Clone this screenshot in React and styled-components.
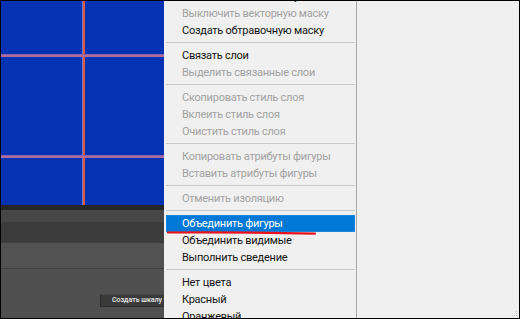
import styled, { createGlobalStyle } from "styled-components";

const GlobalStyle = createGlobalStyle`
  html, body {
    margin: 0;
    padding: 0;
    background: #000;
  }
  * {
    box-sizing: border-box;
  }
`;

const menuItems = [
  { label: "Выключить слой-маску" },
  { label: "Выключить векторную маску", disabled: true },
  { label: "Создать обтравочную маску" },
  { sep: true },
  { label: "Связать слои" },
  { label: "Выделить связанные слои", disabled: true },
  { sep: true },
  { label: "Скопировать стиль слоя", disabled: true },
  { label: "Вклеить стиль слоя", disabled: true },
  { label: "Очистить стиль слоя", disabled: true },
  { sep: true },
  { label: "Копировать атрибуты фигуры", disabled: true },
  { label: "Вставить атрибуты фигуры", disabled: true },
  { sep: true },
  { label: "Отменить изоляцию", disabled: true },
  { sep: true },
  { label: "Объединить фигуры", active: true },
  { label: "Объединить видимые" },
  { label: "Выполнить сведение" },
  { sep: true },
  { label: "Нет цвета" },
  { label: "Красный" },
  { label: "Оранжевый" },
];

function App() {
  return (
    <>
      <GlobalStyle />
      <Frame>
        <Workspace>
          <Canvas>
            <Guide $vertical style={{ left: 81 }} />
            <Guide style={{ top: 53 }} />
            <Guide style={{ top: 154 }} />
          </Canvas>
          <Band $h={5} $bg="#262626" />
          <Band $h={12} $bg="#474747" />
          <Band $h={21} $bg="#3c3c3c" />
          <Band $h={25} $bg="#525252" $line />
          <Timeline>
            <TimelineButton>Создать шкалу времени</TimelineButton>
          </Timeline>
        </Workspace>

        <Menu>
          <MenuList>
            {menuItems.map((item, i) =>
              item.sep ? (
                <Separator key={i} />
              ) : (
                <MenuItem key={i} $disabled={item.disabled} $active={item.active}>
                  {item.label}
                </MenuItem>
              )
            )}
          </MenuList>
          <Underline viewBox="0 0 192 6" preserveAspectRatio="none">
            <path d="M4 2.5 Q 80 2 151 3.6" stroke="#e8101a" strokeWidth="2.2" fill="none" strokeLinecap="round" />
          </Underline>
        </Menu>

        <Divider />

        <SidePane>
          <Grip viewBox="0 0 7 7">
            {[[5, 1], [3, 3], [5, 3], [1, 5], [3, 5], [5, 5]].map(([x, y], i) => (
              <rect key={i} x={x} y={y} width="1" height="1" fill="#c6c6c6" />
            ))}
          </Grip>
        </SidePane>
      </Frame>
    </>
  );
}

const Frame = styled.div`
  width: 520px;
  height: 319px;
  border: 1px solid #000;
  display: flex;
  flex-direction: row;
  overflow: hidden;
  background: #f0f0f0;
`;

const Workspace = styled.div`
  width: 163px;
  flex-shrink: 0;
  display: flex;
  flex-direction: column;
  background: #4f4f4f;
  overflow: hidden;
`;

const Canvas = styled.div`
  height: 204px;
  flex-shrink: 0;
  background: #0332b2;
  position: relative;
`;

const Guide = styled.div`
  position: absolute;
  ${(p) =>
    p.$vertical
      ? `
    top: 0;
    bottom: 0;
    width: 3px;
    background: #e4583a;
    border-left: 1px solid #5f7ad8;
  `
      : `
    left: 0;
    right: 0;
    height: 3px;
    background: #b06c98;
    border-top: 1px solid #8a62b0;
  `}
`;

const Band = styled.div`
  height: ${(p) => p.$h}px;
  flex-shrink: 0;
  background: ${(p) => p.$bg};
  border-bottom: ${(p) => (p.$line ? "1px solid #3e3e3e" : "none")};
  box-sizing: content-box;
`;

const Timeline = styled.div`
  flex: 1;
  background: #505050;
  padding-top: 19px;
  padding-left: 99px;
  white-space: nowrap;
`;

const TimelineButton = styled.div`
  display: inline-block;
  white-space: nowrap;
  height: 13px;
  line-height: 11px;
  padding: 0 8px 0 11px;
  background: #3a3a3a;
  border: 1px solid #2c2c2c;
  border-top-color: #474747;
  color: #ececec;
  font-family: Roboto, "Noto Sans", sans-serif;
  font-size: 7px;
  font-weight: 500;
`;

const Menu = styled.div`
  width: 192px;
  flex-shrink: 0;
  background: #f0f0f0;
  position: relative;
  overflow: hidden;
`;

const MenuList = styled.div`
  display: flex;
  flex-direction: column;
  margin-top: -13.5px;
  padding: 0 1px 0 2px;
`;

const MenuItem = styled.div`
  height: 17px;
  line-height: 17px;
  padding-left: 16px;
  white-space: nowrap;
  font-family: Roboto, "Noto Sans", sans-serif;
  font-size: 11px;
  letter-spacing: -0.25px;
  color: ${(p) => (p.$active ? "#ffffff" : p.$disabled ? "#a2a2a2" : "#141414")};
  background: ${(p) => (p.$active ? "#0078d7" : "transparent")};
  box-shadow: ${(p) => (p.$active ? "inset 0 0 0 1px #1a84dc" : "none")};
`;

const Separator = styled.div`
  height: 8px;
  display: flex;
  align-items: center;

  &::after {
    content: "";
    flex: 1;
    height: 1px;
    background: #c8c8c8;
  }
`;

const Underline = styled.svg`
  position: absolute;
  left: 0;
  top: 229px;
  width: 192px;
  height: 6px;
  pointer-events: none;
`;

const Divider = styled.div`
  width: 1px;
  flex-shrink: 0;
  background: #a6a6a6;
`;

const SidePane = styled.div`
  flex: 1;
  background: #f0f0f0;
  position: relative;
`;

const Grip = styled.svg`
  position: absolute;
  right: 1px;
  bottom: 1px;
  width: 7px;
  height: 7px;
`;

export default App;
